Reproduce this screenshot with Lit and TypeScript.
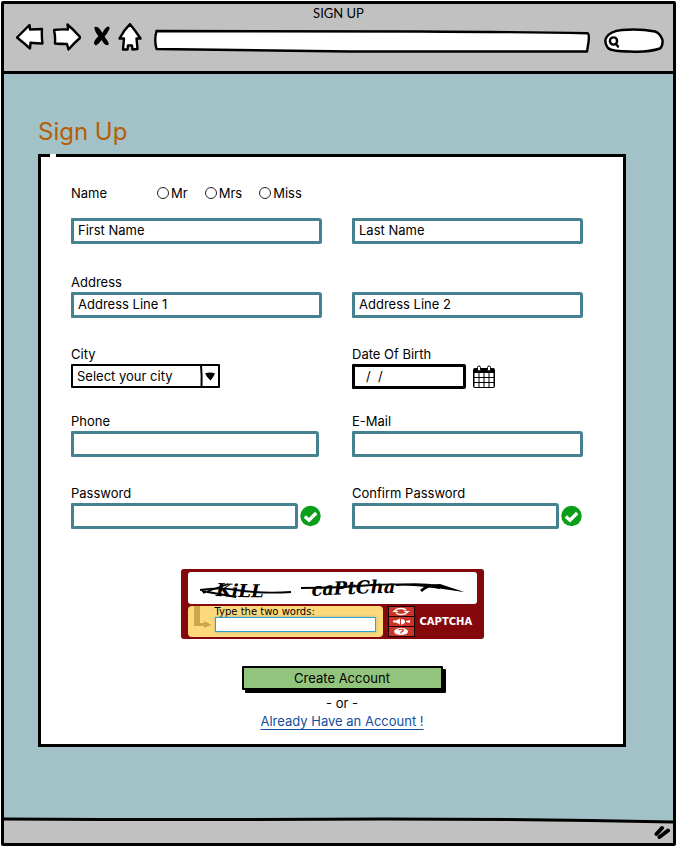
import { LitElement, html, css, nothing } from "lit";
import { customElement, property } from "lit/decorators.js";

const controls = css`
  * {
    box-sizing: border-box;
  }
  button,
  input,
  select {
    font: inherit;
    color: inherit;
    margin: 0;
  }
  svg {
    display: block;
  }
  svg .ink {
    fill: #fff;
    stroke: #000;
    stroke-width: 2.4;
    stroke-linejoin: round;
    stroke-linecap: round;
  }
`;

@customElement("browser-bar")
export class BrowserBar extends LitElement {
  static styles = [
    controls,
    css`
      :host {
        display: block;
        background: #c1c1c1;
        border-bottom: 3px solid #000;
        padding-bottom: 18px;
      }
      .title {
        font-family: Lato, "Noto Sans", sans-serif;
        font-size: 13px;
        line-height: 19px;
        text-align: center;
      }
      nav {
        display: flex;
        padding: 0 9px 0 12px;
      }
      button {
        border: 0;
        padding: 0;
        background: none;
      }
      .forward {
        margin: 0 12px 0 9px;
      }
      .home {
        margin: 0 12px 0 7px;
      }
      .field {
        position: relative;
        height: 30px;
      }
      .url {
        flex: 1;
        margin-right: 14px;
      }
      .search {
        width: 60px;
      }
      .field svg {
        width: 100%;
        height: 30px;
      }
      .field input {
        position: absolute;
        inset: 9px 4px 5px 4px;
        width: calc(100% - 8px);
        border: 0;
        padding: 0;
        background: none;
        outline: none;
      }
      .search input {
        left: 16px;
        width: calc(100% - 20px);
      }
      .line {
        vector-effect: non-scaling-stroke;
      }
    `,
  ];

  render() {
    return html`
      <div class="title">SIGN UP</div>
      <nav>
        <button aria-label="Back">
          <svg width="28" height="30" viewBox="16 23 28 30">
            <path class="ink" d="M17 37.500L29.500 25L30 29.500L42 29Q41.500 37 42.500 43.500Q36 43.500 30.500 42.800L30 48.500Q24 43 17 37.500Z" />
          </svg>
        </button>
        <button class="forward" aria-label="Forward">
          <svg width="28" height="30" viewBox="53 23 28 30">
            <path class="ink" d="M54 30Q60 29 68 29.500L67.500 24.500Q74 30 80.500 37.500Q74 43 68.500 49.500L67 44Q61 44 55 43.500Q55.500 36 54 30Z" />
          </svg>
        </button>
        <button aria-label="Stop">
          <svg width="18" height="30" viewBox="93 23 18 30">
            <path d="M94.500 27Q98 26 100.500 30L102.500 33Q105 27 108.500 26.500Q110.500 27 109 30Q107 34 104.500 36.500Q108 41 109 44Q107 46.500 104 43.500L101.500 40Q99 44 96 45.500Q93 44 94.500 41Q96 38.500 98.500 36Q94 31 94.500 27Z" />
          </svg>
        </button>
        <button class="home" aria-label="Home">
          <svg width="24" height="30" viewBox="118 23 24 30">
            <path class="ink" d="M130 24.200Q135 30 140.500 38.500L136.500 38.500L137.500 49L132.500 49.500L132 45.500L128 45.500L127.500 49.500L123 49.500L124 38.500L119.500 38.500Q124 30 130 24.200Z" />
          </svg>
        </button>
        <div class="field url">
          <svg viewBox="154 23 436 30" preserveAspectRatio="none">
            <path class="ink line" d="M156.500 31Q300 31 420 31.500Q520 32 587.500 33.200Q589.500 34 588.500 42L587 51.500Q480 52 350 51.500Q220 50 156.500 49Q154 40 156.500 31Z" />
          </svg>
          <input type="text" aria-label="Address bar" />
        </div>
        <div class="field search">
          <svg viewBox="604 23 60 30">
            <path class="ink" d="M606 38Q610 31 622 30Q640 28.500 655 31.500Q660 33 662.500 40Q663 46 660 48.500Q648 52.500 630 51.500Q612 51.500 608 48Q604 43 606 38Z" />
            <circle class="ink" cx="613.500" cy="41" r="3.600" />
            <path class="ink" d="M616 44L618 46.500" />
          </svg>
          <input type="text" aria-label="Search" />
        </div>
      </nav>
    `;
  }
}

@customElement("captcha-box")
export class CaptchaBox extends LitElement {
  static styles = [
    controls,
    css`
      :host {
        display: block;
        width: 303px;
        padding: 3px 7px 2px;
        background: #83070b;
        border-radius: 3px;
        font-family: "DejaVu Sans", sans-serif;
      }
      .picture {
        height: 32px;
        background: #fff;
        border-radius: 3px;
      }
      .words {
        font: italic bold 18px "DejaVu Serif", serif;
      }
      .strike {
        fill: none;
        stroke: #000;
        stroke-width: 1.8;
      }
      .lower {
        display: flex;
        gap: 5px;
        margin-top: 2px;
        height: 31px;
      }
      .answer {
        display: flex;
        width: 195px;
        padding: 0 7px 0 6px;
        gap: 2px;
        background: #fdd97c;
        border-radius: 4px;
      }
      .prompt {
        flex: 1;
        display: flex;
        flex-direction: column;
      }
      label {
        font-size: 10px;
        line-height: 11px;
        height: 11px;
      }
      input {
        width: 100%;
        height: 15px;
        padding: 0 2px;
        border: 1px solid #2fa3d8;
        background: #fff;
        font-size: 10px;
        box-shadow: 0 0 3px #a8b98a;
        outline: none;
      }
      .tools {
        display: grid;
        grid-template-rows: repeat(3, 9px);
        gap: 1px;
        width: 27px;
        height: 31px;
        padding: 1px;
        background: #1a0203;
      }
      .tools button {
        border: 0;
        padding: 0;
        background: #cb3529;
        display: grid;
        place-items: center;
      }
      .brand {
        align-self: center;
        font-size: 10px;
        font-weight: bold;
        line-height: 12px;
        color: #fff;
      }
      .glyph {
        fill: none;
        stroke: #fff;
        stroke-width: 1.6;
      }
      .solid {
        fill: #fff;
      }
      .mark {
        fill: none;
        stroke: #cb3529;
        stroke-width: 1.2;
      }
    `,
  ];

  render() {
    return html`
      <div class="picture">
        <svg width="289" height="32" viewBox="188 572 289 32">
          <defs>
            <path id="first" d="M216 596Q250 598 300 597" />
            <path id="second" d="M312 596Q345 594 380 593Q420 592 470 598" />
          </defs>
          <text class="words"><textPath href="#first">KiLL</textPath></text>
          <text class="words"><textPath href="#second">caPtCha</textPath></text>
          <path class="strike" d="M200 590Q220 587 236 590Q262 594 291 592" />
          <path class="strike" d="M202 591L236 597M203 593L228 584M301 588Q340 588 372 585Q410 583 440 588" />
          <path d="M396 584Q420 582 440 585L464 592L436 588Q415 584 396 586Z" />
          <path d="M420 590Q425 584 440 584L464 592L438 587Q428 586 422 592Z" />
        </svg>
      </div>
      <div class="lower">
        <div class="answer">
          <svg width="19" height="31" viewBox="194 606 19 31">
            <path fill="#cba84a" d="M194 606H200V623H204V621L212 625L204 628V626H194Z" />
          </svg>
          <div class="prompt">
            <label for="words">Type the two words:</label>
            <input id="words" type="text" />
          </div>
        </div>
        <div class="tools">
          <button aria-label="New words">
            <svg width="22" height="9" viewBox="0 0 22 9">
              <path class="glyph" d="M5 4Q6 1.500 11 1.500Q15 1.500 16 3.500M17 5Q16 7.500 11 7.500Q7 7.500 6 5.500" />
              <path class="solid" d="M13 4H20L17 6ZM2 5H9L5 3Z" />
            </svg>
          </button>
          <button aria-label="Listen">
            <svg width="22" height="9" viewBox="0 0 22 9">
              <path class="solid" d="M3 3.500H6L10 1.500V7.500L6 5.500H3ZM11 2Q15 2 15 4.500Q15 7 11 7.500ZM16 4L20 3V6L16 5Z" />
            </svg>
          </button>
          <button aria-label="Help">
            <svg width="22" height="9" viewBox="0 0 22 9">
              <ellipse class="solid" cx="11" cy="4.500" rx="7" ry="3.600" />
              <path class="mark" d="M8.500 3Q11 1.500 13.500 3Q13 4.500 11 5V6.500" />
            </svg>
          </button>
        </div>
        <span class="brand">CAPTCHA</span>
      </div>
    `;
  }
}

@customElement("sign-up-field")
export class SignUpField extends LitElement {
  @property() label = "";
  @property() hint = "";
  @property() type = "text";
  @property({ type: Boolean }) checked = false;
  @property({ type: Boolean }) unlabelled = false;

  static styles = [
    controls,
    css`
      :host {
        display: flex;
        flex-direction: column;
        justify-content: flex-end;
        min-width: 0;
      }
      label {
        line-height: 20px;
      }
      .line {
        display: flex;
        align-items: center;
        gap: 2px;
      }
      input {
        flex: 1;
        min-width: 0;
        height: 26px;
        padding: 0 4px 2px;
        border: 3px solid #468191;
        border-radius: 1px 3px 2px 1px;
        background: #fff;
        outline: none;
      }
      input::placeholder {
        color: #000;
        opacity: 1;
      }
      .tick {
        flex: none;
        margin-right: 1px;
      }
    `,
  ];

  render() {
    return html`
      ${this.unlabelled ? nothing : html`<label for="box">${this.label}</label>`}
      <div class="line">
        <input
          id="box"
          type=${this.type}
          placeholder=${this.hint}
          aria-label=${this.unlabelled ? this.label : nothing}
        />
        ${this.checked
          ? html`<svg class="tick" width="21" height="22" viewBox="0 0 21 22" role="img" aria-label="Valid">
              <circle cx="10.500" cy="11" r="10.200" fill="#0a9e1a" />
              <path d="M4.800 11.500L9 15.200L16.200 8" fill="none" stroke="#fff" stroke-width="3.400" />
            </svg>`
          : nothing}
      </div>
    `;
  }
}

@customElement("app-root")
export class AppRoot extends LitElement {
  static styles = [
    controls,
    css`
      :host {
        display: flex;
        min-height: 100vh;
        box-sizing: border-box;
        padding: 1px;
        background: #fff;
        color: #000;
        font-family: Inter, "Open Sans", sans-serif;
        font-size: 13px;
        line-height: 18px;
      }
      .frame {
        flex: 1;
        min-width: 0;
        display: flex;
        flex-direction: column;
        border: 3px solid #000;
        border-radius: 2px;
        background: #a2c2c8;
      }
      main {
        flex: 1;
        padding: 42px 47px 48px 34px;
      }
      h1 {
        margin: 0 0 6px;
        font-size: 24px;
        line-height: 32px;
        font-weight: 400;
        color: #b45f06;
      }
      .card {
        position: relative;
        border: 3px solid #000;
        background: #fff;
        padding: 26px 0 14px;
      }
      .card::before {
        content: "";
        position: absolute;
        top: -3px;
        left: 9px;
        width: 6px;
        height: 3px;
        background: #fff;
      }
      .fields {
        display: flex;
        flex-direction: column;
        padding: 0 40px 0 30px;
      }
      .titles {
        display: flex;
        align-items: center;
        height: 20px;
        margin-bottom: 15px;
      }
      .caption {
        width: 86px;
      }
      .choices {
        display: flex;
        gap: 17px;
      }
      .choices label {
        display: flex;
        align-items: center;
        gap: 2px;
      }
      .choices input {
        appearance: none;
        width: 12px;
        height: 12px;
        border: 1px solid #222;
        border-radius: 50%;
      }
      .choices input:checked {
        background: #222;
      }
      .row {
        display: grid;
        grid-template-columns: 251fr 231fr;
        column-gap: 30px;
        margin-bottom: 26px;
      }
      .row.loose {
        margin-bottom: 28px;
      }
      .row.tight {
        margin-bottom: 22px;
      }
      .phone {
        margin-right: 3px;
      }
      .stack {
        display: flex;
        flex-direction: column;
      }
      .stack > label {
        line-height: 20px;
      }
      .picker {
        position: relative;
        width: 149px;
      }
      select {
        appearance: none;
        display: block;
        width: 100%;
        height: 24px;
        border: 2px solid #000;
        border-radius: 1px;
        padding: 0 20px 0 4px;
        background: #fff;
        outline: none;
      }
      .picker svg {
        position: absolute;
        top: 0;
        right: 0;
        pointer-events: none;
      }
      .birth {
        display: flex;
        align-items: center;
        gap: 7px;
      }
      .birth input {
        width: 114px;
        height: 25px;
        border: 3px solid #000;
        border-radius: 1px 2px 2px 1px;
        padding: 0 11px 2px;
        background: #fff;
        outline: none;
      }
      .birth input::placeholder {
        color: #000;
        opacity: 1;
      }
      .birth button {
        border: 0;
        padding: 0;
        background: none;
      }
      captcha-box {
        box-sizing: border-box;
        margin: 14px auto 27px;
      }
      .actions {
        display: flex;
        flex-direction: column;
        align-items: center;
        padding-left: 20px;
      }
      .create {
        width: 201px;
        height: 24px;
        margin-bottom: 4px;
        padding: 0;
        border: 2px solid #000;
        border-radius: 1px;
        background: #93c47d;
        box-shadow: 3px 3px 0 #000;
      }
      a {
        color: #134f9c;
        text-underline-offset: 3px;
      }
      footer {
        position: relative;
        display: flex;
        justify-content: flex-end;
        height: 25px;
        padding: 7px 3px 0;
        background: #c1c1c1;
      }
      .edge {
        position: absolute;
        left: 0;
        top: -2px;
        width: 100%;
        height: 8px;
      }
    `,
  ];

  render() {
    return html`
      <div class="frame">
        <browser-bar></browser-bar>
        <main>
          <h1>Sign Up</h1>
          <form class="card" @submit=${(e: Event) => e.preventDefault()}>
            <div class="fields">
              <div class="titles" role="radiogroup" aria-labelledby="name-caption">
                <span class="caption" id="name-caption">Name</span>
                <div class="choices">
                  ${["Mr", "Mrs", "Miss"].map(
                    (t) => html`<label><input type="radio" name="title" value=${t} />${t}</label>`
                  )}
                </div>
              </div>
              <div class="row loose">
                <sign-up-field unlabelled label="First Name" hint="First Name"></sign-up-field>
                <sign-up-field unlabelled label="Last Name" hint="Last Name"></sign-up-field>
              </div>
              <div class="row">
                <sign-up-field label="Address" hint="Address Line 1"></sign-up-field>
                <sign-up-field unlabelled label="Address Line 2" hint="Address Line 2"></sign-up-field>
              </div>
              <div class="row tight">
                <div class="stack">
                  <label for="city">City</label>
                  <div class="picker">
                    <select id="city">
                      <option>Select your city</option>
                    </select>
                    <svg width="20" height="24" viewBox="0 0 20 24">
                      <path d="M1 1Q2 12 1.500 23" fill="none" stroke="#000" stroke-width="2" />
                      <path d="M5 9.500Q10 7.500 15 9.500Q13.500 13 10.500 16.500Q7 13.500 5 9.500Z" />
                    </svg>
                  </div>
                </div>
                <div class="stack">
                  <label for="birth">Date Of Birth</label>
                  <div class="birth">
                    <input id="birth" type="text" placeholder="/  /" />
                    <button type="button" aria-label="Pick a date">
                      <svg width="22" height="24" viewBox="0 0 22 24">
                        <path d="M2 3H20Q22 3 22 5V21Q22 23 20 23H2Q0 23 0 21V5Q0 3 2 3Z" />
                        <path
                          fill="#fff"
                          d="M1.500 8H5.500V12H1.500ZM6.500 8H10.500V12H6.500ZM11.500 8H15.500V12H11.500ZM16.500 8H20.500V12H16.500ZM1.500 13H5.500V17H1.500ZM6.500 13H10.500V17H6.500ZM11.500 13H15.500V17H11.500ZM16.500 13H20.500V17H16.500ZM1.500 18H5.500V22H1.500ZM6.500 18H10.500V22H6.500ZM11.500 18H15.500V22H11.500ZM16.500 18H20.500V22H16.500Z"
                        />
                        <rect x="4.500" y="1" width="3" height="5" rx="1.500" fill="#fff" stroke="#000" />
                        <rect x="14.500" y="1" width="3" height="5" rx="1.500" fill="#fff" stroke="#000" />
                      </svg>
                    </button>
                  </div>
                </div>
              </div>
              <div class="row">
                <sign-up-field class="phone" type="tel" label="Phone"></sign-up-field>
                <sign-up-field type="email" label="E-Mail"></sign-up-field>
              </div>
              <div class="row">
                <sign-up-field type="password" label="Password" checked></sign-up-field>
                <sign-up-field type="password" label="Confirm Password" checked></sign-up-field>
              </div>
            </div>
            <captcha-box></captcha-box>
            <div class="actions">
              <button class="create">Create Account</button>
              <span>- or -</span>
              <a href="#login">Already Have an Account !</a>
            </div>
          </form>
        </main>
        <footer>
          <svg class="edge" viewBox="0 0 669 8" preserveAspectRatio="none">
            <path d="M0 0H669V6Q520 2 380 2L0 3Z" fill="#a2c2c8" />
            <path d="M0 3Q200 4 380 3Q520 3 669 6" fill="none" stroke="#000" stroke-width="3" />
          </svg>
          <svg width="16" height="14" viewBox="655 827 16 14">
            <path d="M657.500 836L663 830M660.500 839L669 832.500" fill="none" stroke="#000" stroke-width="4" stroke-linecap="round" />
          </svg>
        </footer>
      </div>
    `;
  }
}
